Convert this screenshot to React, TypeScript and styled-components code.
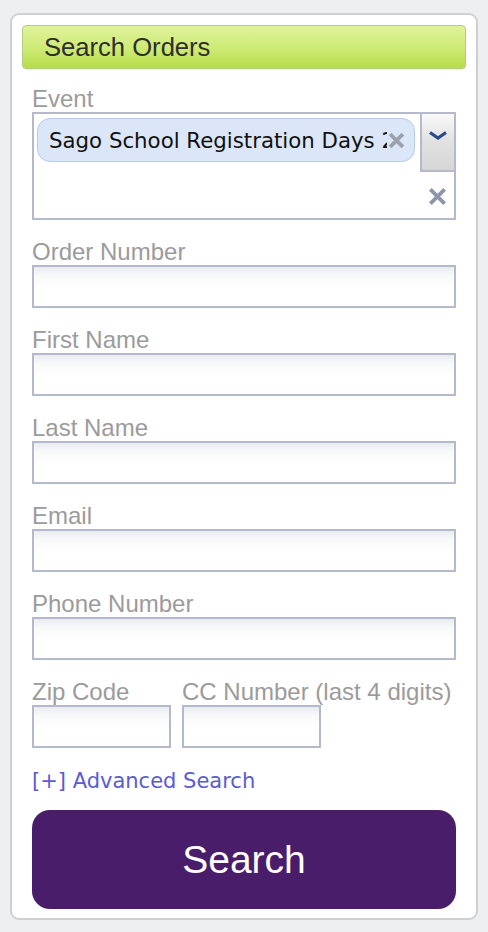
import { createGlobalStyle, styled } from 'styled-components';

const GlobalStyle = createGlobalStyle`
  html, body {
    margin: 0;
    padding: 0;
    background: #eeeff1;
  }

  body {
    font-family: 'Liberation Sans', Arial, sans-serif;
  }

  * {
    box-sizing: border-box;
  }
`;

type Field = { id: string; label: string };

const textFields: Field[] = [
  { id: 'order', label: 'Order Number' },
  { id: 'first', label: 'First Name' },
  { id: 'last', label: 'Last Name' },
  { id: 'email', label: 'Email' },
  { id: 'phone', label: 'Phone Number' },
];

function Cross({ size, color, weight }: { size: number; color: string; weight: number }) {
  return (
    <svg width={size} height={size} viewBox="0 0 16 16" aria-hidden>
      <path
        d="M2 2 L14 14 M14 2 L2 14"
        stroke={color}
        strokeWidth={weight}
        strokeLinecap="butt"
      />
    </svg>
  );
}

export default function App() {
  return (
    <Page>
      <GlobalStyle />
      <Card>
        <Header>Search Orders</Header>
        <Form>
          <Group>
            <Label>Event</Label>
            <EventBox>
              <TagArea>
                <Tag>
                  <TagText>Sago School Registration Days 2024</TagText>
                  <TagRemove>
                    <Cross size={17} color="#9ca1ac" weight={3.6} />
                  </TagRemove>
                </Tag>
              </TagArea>
              <EventControls>
                <DropToggle>
                  <svg width="20" height="9" viewBox="0 0 20 9" aria-hidden>
                    <path d="M2 1.5 L10 7 L18 1.5" fill="none" stroke="#284a8c" strokeWidth="3.2" />
                  </svg>
                </DropToggle>
                <ClearAll>
                  <Cross size={19} color="#8d95a8" weight={3.2} />
                </ClearAll>
              </EventControls>
            </EventBox>
          </Group>

          {textFields.map(f => (
            <Group key={f.id}>
              <Label htmlFor={f.id}>{f.label}</Label>
              <Input id={f.id} type="text" />
            </Group>
          ))}

          <SplitRow>
            <Column>
              <Label htmlFor="zip">Zip Code</Label>
              <Input id="zip" type="text" $narrow />
            </Column>
            <Column>
              <Label htmlFor="cc">CC Number (last 4 digits)</Label>
              <Input id="cc" type="text" $narrow />
            </Column>
          </SplitRow>

          <AdvancedLink href="#">[+] Advanced Search</AdvancedLink>
          <SearchButton type="button">Search</SearchButton>
        </Form>
      </Card>
    </Page>
  );
}

const Page = styled.div`
  padding: 13px 10px 12px;
`;

const Card = styled.div`
  background: #fff;
  border: 2px solid #cfd0d2;
  border-radius: 9px;
  padding: 10px 10px 9px;
`;

const Header = styled.h2`
  margin: 0 0 16px;
  height: 44px;
  padding-left: 21px;
  display: flex;
  align-items: center;
  font-size: 25.6px;
  font-weight: 400;
  color: #2e2e2e;
  border: 1px solid #b4cd86;
  border-radius: 4px;
  background: linear-gradient(to bottom, #e0f39c 0%, #cdea74 55%, #b7dd48 100%);
  box-shadow: 0 1px 1px rgba(0, 0, 0, 0.08);
`;

const Form = styled.div`
  padding: 0 10px;
  display: flex;
  flex-direction: column;
  gap: 18px;
`;

const Group = styled.div`
  display: flex;
  flex-direction: column;
`;

const Label = styled.label`
  font-size: 24px;
  line-height: 27px;
  color: #9b9b9b;
  white-space: nowrap;
`;

const Input = styled.input<{ $narrow?: boolean }>`
  width: ${p => (p.$narrow ? '139px' : '100%')};
  height: 43px;
  margin: 0;
  border: 2px solid #b6b8cb;
  border-radius: 0;
  background: linear-gradient(to bottom, #e9ecee 0, #f7f8f9 8px, #fff 20px);
  font-size: 20px;
  outline: none;
`;

const EventBox = styled.div`
  height: 108px;
  display: flex;
  border: 2px solid #b6b8cb;
  background: #fff;
`;

const TagArea = styled.div`
  flex: 1;
  padding: 4px 5px 0 3px;
`;

const Tag = styled.div`
  width: 378px;
  height: 44px;
  display: flex;
  align-items: center;
  padding: 0 9px 0 11px;
  background: #dbe6f8;
  border: 1px solid #b7cbe9;
  border-radius: 13px;
`;

const TagText = styled.span`
  flex: 1;
  overflow: hidden;
  white-space: nowrap;
  font-family: 'DejaVu Sans', Verdana, sans-serif;
  font-size: 21.3px;
  color: #111;
`;

const TagRemove = styled.span`
  display: flex;
  margin-left: 1px;
`;

const EventControls = styled.div`
  width: 35px;
  display: flex;
  flex-direction: column;
`;

const DropToggle = styled.div`
  height: 58px;
  display: flex;
  justify-content: center;
  padding-top: 17px;
  border-left: 2px solid #b6b8cb;
  border-bottom: 2px solid #b6b8cb;
  background: linear-gradient(to bottom, #fafafa 0%, #e2e2e2 45%, #d6d6d6 100%);
`;

const ClearAll = styled.div`
  flex: 1;
  display: flex;
  justify-content: center;
  align-items: center;
  padding-left: 1px;
  padding-top: 2px;
`;

const SplitRow = styled.div`
  display: flex;
  gap: 11px;
`;

const Column = styled.div`
  display: flex;
  flex-direction: column;
`;

const AdvancedLink = styled.a`
  margin-top: 2px;
  font-family: 'DejaVu Sans', Verdana, sans-serif;
  font-size: 21px;
  line-height: 26px;
  color: #5b5bd4;
  text-decoration: none;
`;

const SearchButton = styled.button`
  margin-top: -2px;
  height: 99px;
  width: 100%;
  border: none;
  border-radius: 18px;
  background: #4a1d6b;
  color: #fff;
  font-family: 'Liberation Sans', Arial, sans-serif;
  font-size: 39px;
  cursor: pointer;
`;
